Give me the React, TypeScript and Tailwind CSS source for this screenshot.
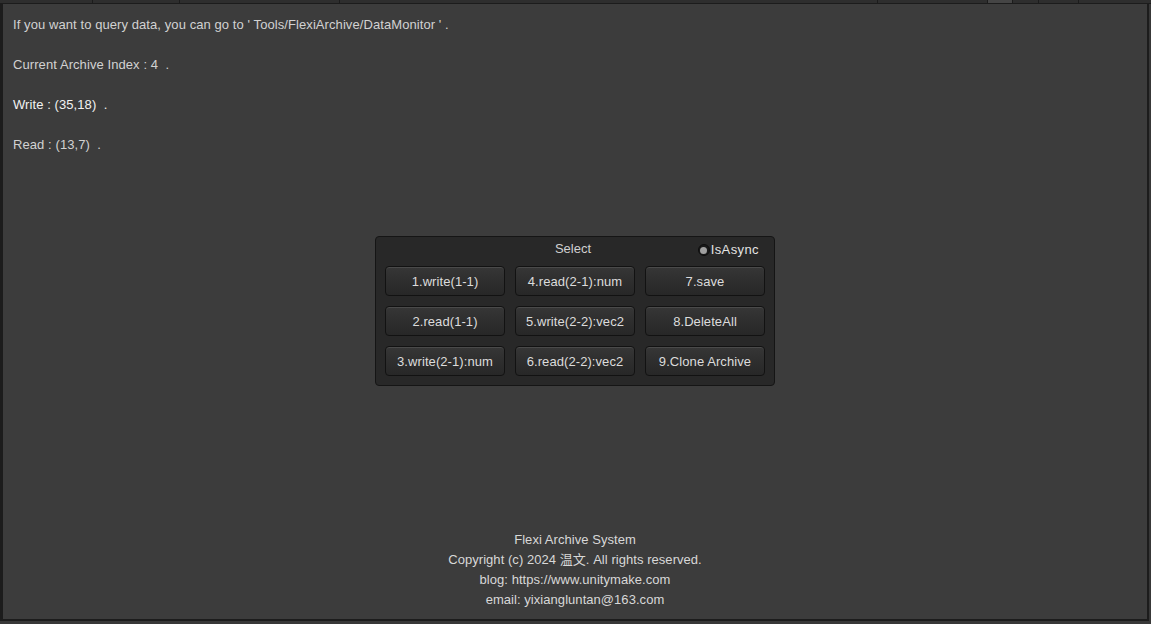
const buttons = [
  "1.write(1-1)",
  "4.read(2-1):num",
  "7.save",
  "2.read(1-1)",
  "5.write(2-2):vec2",
  "8.DeleteAll",
  "3.write(2-1):num",
  "6.read(2-2):vec2",
  "9.Clone Archive",
];

const App = () => {
  return (
    <div className="h-[624px] w-[1151px] bg-[#383838] flex flex-col text-[13px] font-['Liberation_Sans','Noto_Sans_CJK_SC',sans-serif] overflow-hidden">
      {/* top tab strip */}
      <div className="h-[3px] flex bg-[#2e2e2e]">
        <div className="w-[93px] border-r border-[#1c1c1c]" />
        <div className="w-[87px] border-r border-[#1c1c1c]" />
        <div className="w-[160px] border-r border-[#1c1c1c]" />
        <div className="w-[538px] border-r border-[#1c1c1c]" />
        <div className="w-[110px] border-r border-[#1c1c1c]" />
        <div className="w-[25px] bg-[#454545] border-r border-[#1c1c1c]" />
        <div className="w-[26px] border-r border-[#1c1c1c]" />
        <div className="w-[40px] border-r border-[#1c1c1c]" />
        <div className="flex-1" />
      </div>
      <div className="h-px bg-[#1c1c1c]" />

      {/* main window */}
      <div className="h-[617px] flex flex-col border-l-[3px] border-r-[2px] border-b-[2px] border-[#1c1c1c] bg-[#3c3c3c] mr-[2px]">
        <div className="flex flex-col gap-[20px] pt-[11px] pl-[10px] text-[#d2d2d2] leading-[20px] tracking-[0.08px]">
          <p>If you want to query data, you can go to ' Tools/FlexiArchive/DataMonitor ' .</p>
          <p>Current Archive Index : 4&nbsp;&nbsp;.</p>
          <p className="text-[#f2f2f2]">Write : (35,18)&nbsp;&nbsp;.</p>
          <p>Read : (13,7)&nbsp;&nbsp;.</p>
        </div>

        {/* select panel */}
        <div className="mt-[81px] self-center w-[400px] h-[150px] rounded-[4px] border border-[#151515] bg-[#282828] px-[9px]">
          <div className="h-[29px] grid grid-cols-3 items-center">
            <div />
            <div className="text-center text-[#d0d0d0] pr-[4px] pb-[6px]">Select</div>
            <div className="flex justify-end items-center pr-[6px] pb-[3px]">
              <span className="w-[12px] h-[12px] rounded-full bg-[#1a1a1a] border border-[#0e0e0e] flex items-center justify-center">
                <span className="w-[7px] h-[7px] rounded-full bg-[#a0a0a0]" />
              </span>
              <span className="ml-[1px] text-[#e4e4e4] tracking-[0.4px]">IsAsync</span>
            </div>
          </div>
          <div className="grid grid-cols-3 gap-[10px]">
            {buttons.map((b) => (
              <button
                key={b}
                className="h-[30px] pt-[1px] rounded-[4px] border border-[#121212] bg-gradient-to-b from-[#363636] to-[#272727] shadow-[inset_0_1px_0_#4a4a4a] text-[#dcdcdc] text-[13px] tracking-[0.08px]"
              >
                {b}
              </button>
            ))}
          </div>
        </div>

        {/* footer */}
        <div className="mt-auto mb-[9px] flex flex-col items-center leading-[20px] text-[#d8d8d8] tracking-[0.05px]">
          <p>Flexi Archive System</p>
          <p>Copyright (c) 2024 温文. All rights reserved.</p>
          <p>blog: https://www.unitymake.com</p>
          <p>email: yixiangluntan@163.com</p>
        </div>
      </div>
    </div>
  );
};

export default App;
